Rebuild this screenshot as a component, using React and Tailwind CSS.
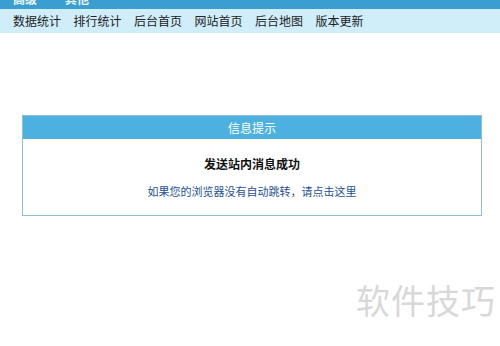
export default function App() {
  const navItems = ["数据统计", "排行统计", "后台首页", "网站首页", "后台地图", "版本更新"];

  return (
    <div className="relative w-[500px] h-[346px] overflow-hidden bg-white font-['Microsoft_YaHei','Noto_Sans_CJK_SC',sans-serif]">
      {/* top menu, scrolled off */}
      <div className="h-[9px] bg-[#3a9fd0] overflow-hidden">
        <div className="flex gap-[28px] pl-[13px] -mt-[8px] text-[12px] font-bold text-white/90 leading-[14px]">
          <span>高级</span>
          <span>其他</span>
        </div>
      </div>

      {/* sub nav */}
      <div className="h-[24px] bg-[#d0eefa] flex items-center pl-[13px] gap-[12.5px] text-[12px] text-[#222]">
        {navItems.map((item) => (
          <span key={item} className="w-[48px] whitespace-nowrap">
            {item}
          </span>
        ))}
      </div>

      {/* message box */}
      <div className="mx-[22px] mt-[82px] w-[460px] border border-[#8fc0d6] bg-white">
        <div className="h-[23px] bg-[#4cb1de] flex items-center justify-center text-[12px] text-white">
          信息提示
        </div>
        <div className="h-[76px] flex flex-col items-center pt-[17px]">
          <div className="text-[12px] font-bold text-[#111] leading-[16px]">发送站内消息成功</div>
          <a className="mt-[11px] text-[11px] text-[#1d4f91] leading-[16px]">
            如果您的浏览器没有自动跳转，请点击这里
          </a>
        </div>
      </div>

      {/* watermark */}
      <div className="absolute left-[356px] top-[280px] text-[34px] leading-[40px] text-[#d8d8d8] tracking-[1px]">
        软件技巧
      </div>
    </div>
  );
}
